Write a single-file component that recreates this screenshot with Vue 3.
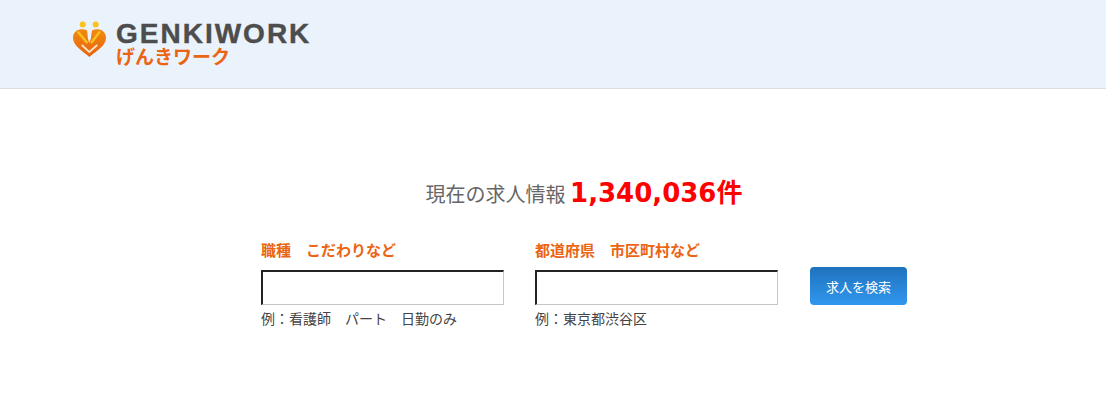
<script setup>
const fields = [
  { label: '職種　こだわりなど', hint: '例：看護師　パート　日勤のみ' },
  { label: '都道府県　市区町村など', hint: '例：東京都渋谷区' }
]
</script>

<template>
  <div class="page">
    <header class="header">
      <div class="logo">
        <svg class="mark" width="36" height="38" viewBox="0 0 36 38">
          <defs>
            <linearGradient id="heart" x1="0" y1="0" x2="0" y2="1">
              <stop offset="0" stop-color="#f08a10" />
              <stop offset="1" stop-color="#e9610f" />
            </linearGradient>
          </defs>
          <circle cx="10.700" cy="3.500" r="3" fill="#f9c21a" />
          <circle cx="23.700" cy="3.500" r="3" fill="#f9c21a" />
          <path d="M17.300 22 15.800 17C15.500 13 15.500 10 14.500 9 10 7 1 8 1 17 1 25 11 30 17.300 36 24 30 34 25 34 17 34 8 25 7 20.500 9 19.500 10 19.500 13 19 17Z" fill="url(#heart)" />
          <path d="M6.300 11.300 14.700 21.300" fill="none" stroke="#f9c21a" stroke-width="2.400" stroke-linecap="round" />
          <path d="M27.300 11.300 19.700 21.300" fill="none" stroke="#f9c21a" stroke-width="2.400" stroke-linecap="round" />
          <path d="M9.700 24 17.300 31 25.300 24" fill="none" stroke="#fde3c4" stroke-width="1.800" />
        </svg>
        <div class="logo-text">
          <div class="logo-en">GENKIWORK</div>
          <div class="logo-ja">げんきワーク</div>
        </div>
      </div>
    </header>

    <main class="main">
      <h1 class="count">現在の求人情報 <strong>1,340,036件</strong></h1>
      <form class="search" @submit.prevent>
        <div v-for="field in fields" :key="field.label" class="field">
          <label class="label">{{ field.label }}</label>
          <input class="input" type="text" />
          <p class="hint">{{ field.hint }}</p>
        </div>
        <button class="submit" type="submit">求人を検索</button>
      </form>
    </main>
  </div>
</template>

<style>
html,
body {
  margin: 0;
  background: #fff;
}
</style>

<style scoped>
.page {
  height: 404px;
  overflow: hidden;
  font-family: "Liberation Sans", "Noto Sans CJK JP", sans-serif;
}

.header {
  height: 89px;
  box-sizing: border-box;
  background: #eaf3fb;
  border-bottom: 1px solid #dcdfe2;
  padding: 21px 0 0 72px;
}

.logo {
  display: flex;
  gap: 8px;
}

.mark {
  flex: none;
}

.logo-text {
  padding-top: 1px;
}

.logo-en {
  font-family: "Liberation Sans", sans-serif;
  font-weight: 700;
  font-size: 28px;
  line-height: 24px;
  letter-spacing: 2px;
  -webkit-text-stroke: 0.4px #4d4d4d;
  color: #4d4d4d;
}

.logo-ja {
  font-family: "Noto Sans CJK JP", sans-serif;
  font-weight: 700;
  font-size: 19px;
  line-height: 20px;
  color: #ea6513;
}

.main {
  padding-top: 86px;
  width: 1168px;
}

.count {
  margin: 0;
  text-align: center;
  font-size: 20px;
  font-weight: 400;
  line-height: 36px;
  color: #666;
  font-family: "Noto Sans CJK JP", sans-serif;
}

.count strong {
  font-family: "DejaVu Sans", "Noto Sans CJK JP", sans-serif;
  font-size: 26px;
  font-weight: 700;
  color: #f00;
}

.search {
  display: flex;
  align-items: flex-start;
  margin: 28px 0 0 261px;
}

.field {
  width: 243px;
  margin-right: 31px;
}

.label {
  display: block;
  font-family: "Noto Sans CJK JP", sans-serif;
  font-size: 15px;
  font-weight: 700;
  line-height: 20px;
  color: #ea6513;
}

.input {
  display: block;
  width: 100%;
  height: 35px;
  margin-top: 10px;
  box-sizing: border-box;
  padding: 0 4px;
  background: #fff;
  border-style: solid;
  border-width: 2px 1px 1px 2px;
  border-color: #222 #c6c6c6 #c6c6c6 #222;
  outline: none;
}

.hint {
  margin: 3px 0 0;
  font-family: "Noto Sans CJK JP", sans-serif;
  font-size: 14px;
  line-height: 20px;
  color: #444;
}

.submit {
  width: 97px;
  height: 38px;
  margin: 27px 0 0 1px;
  border: 0;
  border-radius: 4px;
  background: linear-gradient(#2072bd, #3097ef);
  color: #fff;
  font-family: "Noto Sans CJK JP", sans-serif;
  font-size: 13px;
  padding: 0;
}
</style>
